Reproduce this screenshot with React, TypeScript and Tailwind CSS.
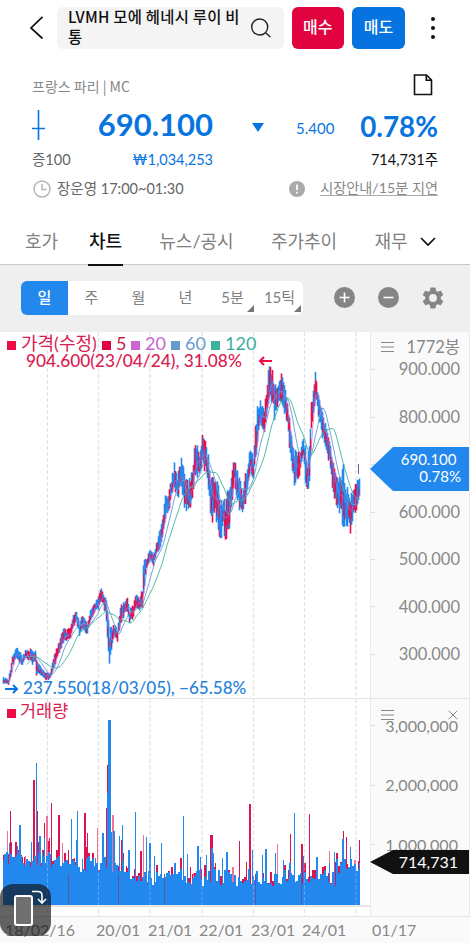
import { clsx } from "clsx";

const BLUE = "#2288ee";
const RED = "#f00a46";

// [x, high, low] of the price band, in chart pixels
const PRICE_BAND = [
  [3, 346, 351], [8, 347, 352], [10, 337, 345], [12, 324, 334], [15, 317, 326], [17, 317, 327],
  [20, 322, 331], [22, 325, 333], [25, 319, 326], [30, 318, 327], [32, 319, 332], [35, 320, 329],
  [36, 329, 342], [40, 335, 343], [45, 342, 348], [50, 340, 346], [53, 327, 337], [57, 315, 324],
  [60, 307, 317], [63, 297, 309], [66, 300, 309], [70, 296, 305], [73, 284, 294], [76, 280, 289],
  [79, 291, 303], [83, 284, 296], [87, 292, 302], [90, 278, 288], [94, 271, 279], [98, 266, 277],
  [101, 257, 269], [105, 266, 279], [107, 279, 304], [109, 302, 333], [111, 295, 314], [114, 294, 304],
  [117, 298, 308], [120, 275, 290], [124, 272, 282], [127, 267, 279], [129, 279, 291], [133, 273, 284],
  [136, 263, 274], [139, 269, 277], [142, 259, 277], [143, 232, 259], [146, 228, 236], [150, 217, 229],
  [153, 224, 232], [157, 209, 219], [160, 197, 214], [163, 184, 199], [165, 162, 184], [168, 164, 179],
  [171, 149, 162], [174, 134, 154], [177, 145, 165], [181, 126, 151], [184, 144, 175], [188, 154, 177],
  [191, 144, 169], [195, 114, 139], [199, 121, 144], [202, 106, 130], [206, 116, 139], [209, 134, 169],
  [211, 149, 189], [215, 147, 179], [218, 159, 194], [220, 169, 206], [223, 171, 189], [225, 174, 211],
  [228, 159, 194], [231, 144, 179], [234, 129, 147], [236, 136, 159], [240, 154, 179], [242, 161, 183],
  [246, 141, 164], [250, 119, 137], [253, 124, 144], [255, 99, 129], [257, 80, 109], [260, 72, 89],
  [264, 79, 99], [267, 54, 79], [269, 33, 60], [272, 42, 68], [274, 59, 84], [277, 54, 74],
  [281, 43, 68], [284, 56, 80], [287, 72, 90], [290, 99, 124], [294, 121, 151], [297, 124, 149],
  [300, 119, 137], [303, 109, 124], [305, 119, 146], [307, 134, 159], [309, 109, 144], [311, 74, 99],
  [313, 60, 79], [315, 42, 64], [318, 64, 84], [321, 77, 99], [325, 94, 114], [329, 109, 129],
  [333, 134, 159], [336, 149, 174], [340, 150, 178], [343, 142, 189], [347, 161, 189], [350, 169, 197],
  [353, 157, 179], [357, 152, 174], [359, 149, 164],
];

// [x, top] of the tall volume bars
const RED_SPIKES = [
  [3, 160], [7, 136], [10, 116], [15, 147], [22, 162], [25, 161], [33, 85], [37, 116], [44, 128],
  [46, 121], [49, 143], [51, 108], [58, 120], [62, 148], [68, 155], [84, 118], [87, 138], [97, 133],
  [106, 113], [107, 70], [110, 43], [112, 120], [121, 145], [126, 171], [140, 156], [143, 140],
  [161, 173], [171, 172], [190, 172], [193, 178], [210, 140], [212, 140], [215, 168], [232, 172],
  [239, 146], [246, 167], [249, 109], [277, 149], [290, 139], [301, 149], [309, 119], [329, 156],
  [335, 167], [343, 136], [346, 142], [354, 165], [359, 145],
];
const BLUE_SPIKES = [
  [5, 162], [9, 148], [17, 151], [19, 130], [31, 147], [36, 68], [39, 141], [42, 157], [44, 143],
  [49, 159], [71, 124], [77, 116], [76, 145], [82, 164], [95, 163], [102, 138], [107, 98],
  [108, 25], [109, 25], [110, 91], [111, 137], [113, 136], [119, 141], [122, 130], [128, 155],
  [135, 117], [146, 142], [149, 148], [154, 161], [161, 148], [174, 168], [183, 121], [187, 159],
  [197, 151], [200, 162], [206, 160], [211, 153], [213, 158], [222, 163], [226, 157], [252, 155],
  [262, 160], [265, 154], [275, 158], [283, 165], [289, 168], [294, 118], [303, 161], [316, 162],
  [329, 168], [334, 157], [342, 144], [350, 152], [359, 168],
];

const GRID_X = [47.5, 98.5, 150, 202, 253.5, 304.5, 356];

const noise = (n: number) => {
  const s = Math.sin(n * 127.1 + 11.7) * 43758.5453;
  return s - Math.floor(s);
};

const bandAt = (x: number) => {
  const i = Math.max(1, PRICE_BAND.findIndex((p) => p[0] >= x));
  const a = PRICE_BAND[i - 1];
  const b = PRICE_BAND[i];
  const t = Math.min(1, Math.max(0, (x - a[0]) / (b[0] - a[0])));
  return [a[1] + (b[1] - a[1]) * t, a[2] + (b[2] - a[2]) * t];
};

const average = (lag: number) => {
  const points: string[] = [];
  for (let x = 3 + lag; x <= 359; x += 1) {
    let sum = 0;
    for (let k = 0; k <= lag; k++) {
      const [hi, lo] = bandAt(x - k);
      sum += (hi + lo) / 2;
    }
    points.push(`${x},${(sum / (lag + 1)).toFixed(1)}`);
  }
  return points.join(" ");
};

const candles = Array.from({ length: 357 }, (_, i) => {
  const x = 3 + i;
  const [hi, lo] = bandAt(x);
  const [nextHi] = bandAt(Math.min(359, x + 1));
  const span = lo - hi;
  const top = hi + (noise(x) - 0.55) * span * 0.4;
  const bottom = lo - (noise(x + 900) - 0.55) * span * 0.4;
  const rising = nextHi < hi;
  const cut = top + (bottom - top) * (0.2 + noise(x + 400) * 0.5);
  return { x, top, bottom, cut, red: noise(x + 70) < (rising ? 0.38 : 0.18), split: noise(x + 33) < 0.5 };
});

const volumes = Array.from({ length: 357 }, (_, i) => {
  const x = 3 + i;
  const early = x < 75 ? 42 : x < 130 ? 38 : x > 335 ? 36 : 25;
  const group = Math.floor(x / 2);
  const blue = early + (noise(group + 5) - 0.35) * 17;
  const red = blue + (noise(group + 210) > 0.62 ? noise(group + 90) * 12 : 0);
  return { x, blue, red };
});

const Dashes = ({ height }: { height: number }) => (
  <>
    {GRID_X.map((x) => (
      <line key={x} x1={x} x2={x} y1="0" y2={height} stroke="#e3e3e3" strokeWidth="1.3" strokeDasharray="4 2" />
    ))}
  </>
);

const PriceChart = () => (
  <svg className="block h-[366px] w-[370px]" viewBox="0 0 370 366">
    <Dashes height={366} />
    <g>
      {candles.map((c) => (
        <g key={c.x}>
          <rect x={c.x - 0.3} y={c.top} width="1.6" height={c.bottom - c.top} fill={c.red ? RED : BLUE} />
          {c.split && <rect x={c.x} y={c.cut} width="1.2" height={(c.bottom - c.cut) * 0.7} fill={c.red ? BLUE : RED} />}
        </g>
      ))}
      <rect x="358" y="132" width="1" height="10" fill="#7459a5" />
    </g>
    <g fill="none" strokeWidth="0.9">
      <polyline points={average(4)} stroke="#cb65d3" strokeOpacity="0.7" />
      <polyline points={average(12)} stroke="#659ccd" />
      <polyline points={average(24)} stroke="#3ab29c" />
    </g>
  </svg>
);

const VolumeChart = () => (
  <svg className="block h-[217px] w-[370px]" viewBox="0 0 370 217">
    <Dashes height={217} />
    <g shapeRendering="crispEdges">
      {volumes.map((v) => (
        <rect key={v.x} x={v.x} y={206 - v.red} width="1" height={v.red} fill="#dc1450" />
      ))}
      {RED_SPIKES.map(([x, y], i) => (
        <rect key={x} x={x} y={y - 4} width={i % 3 === 0 ? 2 : 1} height={210 - y} fill={i % 4 === 1 ? "#ee7598" : "#dc1450"} />
      ))}
      {volumes.map((v) => (
        <rect key={v.x} x={v.x} y={206 - v.blue} width="1" height={v.blue} fill={BLUE} />
      ))}
      {BLUE_SPIKES.map(([x, y], i) => (
        <rect key={x} x={x} y={y - 4} width={i % 3 === 0 ? 2 : 1} height={210 - y} fill={BLUE} />
      ))}
      {[68, 118, 164, 255, 301].map((x) => (
        <rect key={x} x={x} y="175" width="1" height="31" fill="#6455a5" />
      ))}
    </g>
    <g stroke="#fff" strokeOpacity="0.25" strokeDasharray="4 2">
      {GRID_X.map((x) => (
        <line key={x} x1={x} x2={x} y1="162" y2="206" />
      ))}
    </g>
    <line x1="0" x2="370" y1="207" y2="207" stroke="#e6e6e6" strokeWidth="2" />
  </svg>
);

const Header = () => (
  <header className="flex h-[49px] pt-[7px]">
    <svg className="ml-[29px] mt-[9px] h-6 w-4" viewBox="0 0 16 24" fill="none" stroke="#111" strokeWidth="1.7">
      <path d="M13.5 .8 2 12 13.5 22.5" />
    </svg>
    <div className="ml-3 flex h-[42px] w-[227px] rounded-md bg-[#f4f4f4] pl-[11px]">
      <p className="w-[178px] whitespace-nowrap text-[15.4px] font-medium leading-[19.5px] tracking-[0.25px] text-[#111] font-['Noto_Sans_CJK_KR',sans-serif]">
        LVMH 모에 헤네시 루이 비
        <br />통
      </p>
      <svg className="ml-[5px] mt-[11px] h-5 w-5" viewBox="0 0 20 20" fill="none" stroke="#222" strokeWidth="1.4">
        <circle cx="8.7" cy="9" r="8" />
        <path d="m14.3 14.6 5 4.5" />
      </svg>
    </div>
    <button className="ml-[7.5px] h-[42px] w-[52.5px] rounded-md bg-[#e0033f] pb-0.5 text-base font-medium text-white">매수</button>
    <button className="ml-2 h-[42px] w-[53px] rounded-md bg-[#0673e0] pb-0.5 text-base font-medium text-white">매도</button>
    <div className="ml-[26px] mt-[10px] flex flex-col gap-[5px]">
      {[0, 1, 2].map((dot) => (
        <span key={dot} className="size-1 rounded-full bg-[#111]" />
      ))}
    </div>
  </header>
);

const Quote = () => (
  <section className="h-[167px] pl-8 pr-8 pt-[24px]">
    <div className="flex h-[26px] items-center justify-between text-[#888]">
      <p className="text-[14px] font-['Noto_Sans_CJK_KR',sans-serif]">프랑스 파리 | MC</p>
      <svg className="mb-0.5 mr-[5px] h-[22px] w-5" viewBox="0 0 20 22" fill="none" stroke="#111" strokeWidth="1.6">
        <path d="M1.5 1h12l5 5v14.5h-17zM13.3 1v5.3h5" />
      </svg>
    </div>
    <div className="flex h-[51px] items-center text-[#0874df]">
      <svg className="h-[30px] w-[14px]" viewBox="0 0 14 30" stroke="#0874df" strokeWidth="1.6">
        <path d="M6.5 0v30M0 18.5h13" />
      </svg>
      <strong className="w-[167px] text-right text-[31px] leading-none">690.100</strong>
      <svg className="ml-[39px] mt-1.5 h-[9px] w-3" viewBox="0 0 12 9" fill="#0874df">
        <path d="M0 0h12L6 9z" />
      </svg>
      <span className="ml-8 w-[39px] whitespace-nowrap pt-2 text-[15px]">5.400</span>
      <strong className="grow pt-1 text-right text-[27.8px] leading-none">0.78%</strong>
    </div>
    <div className="flex h-[20px] items-center text-[14.5px] leading-none">
      <span className="w-[60px] text-[#666]">증100</span>
      <span className="w-[121px] text-right text-[#0874df]">₩1,034,253</span>
      <span className="grow text-right text-[#111]">714,731주</span>
    </div>
    <div className="flex h-[36px] items-center pt-px text-[14.5px] leading-none text-[#666]">
      <svg className="ml-px h-[18px] w-[18px]" viewBox="0 0 18 18" fill="none" stroke="#b5b5b5" strokeWidth="1.5">
        <circle cx="9" cy="9" r="8" />
        <path d="M9 4v5.5h4.5" />
      </svg>
      <span className="ml-[6px] grow pt-0.5">장운영 17:00~01:30</span>
      <svg className="mr-[15px] h-4 w-4" viewBox="0 0 16 16">
        <circle cx="8" cy="8" r="8" fill="#aaa" />
        <path d="M8 3.5v5.5M8 10.8v1.8" stroke="#fff" strokeWidth="1.7" />
      </svg>
      <span className="whitespace-nowrap border-b border-[#aaa] text-[14.2px] text-[#888]">시장안내/15분 지연</span>
    </div>
  </section>
);

const TABS = [
  { label: "호가", width: "w-[33px]" },
  { label: "차트", width: "w-[35px]" },
  { label: "뉴스/공시", width: "w-[75px]" },
  { label: "주가추이", width: "w-[68px]" },
  { label: "재무", width: "w-[34px]" },
];

const Tabs = () => (
  <nav className="flex h-[49px] border-b border-[#c9c9c9] pl-[25px] text-[18px] text-[#808080]">
    {TABS.map((tab, i) => (
      <div
        key={tab.label}
        className={clsx(
          "flex h-[50px] justify-center whitespace-nowrap pt-[12px]",
          tab.width,
          i === 1 && "ml-[30px] border-b-2 border-[#111] font-medium text-[#111]",
          i > 1 && "ml-9"
        )}
      >
        {tab.label}
      </div>
    ))}
    <svg className="ml-3 mt-[21px] h-[10px] w-4" viewBox="0 0 16 10" fill="none" stroke="#111" strokeWidth="1.7">
      <path d="m1 1 7 7 7-7" />
    </svg>
  </nav>
);

const PERIODS = ["일", "주", "월", "년", "5분", "15틱"];

const Toolbar = () => (
  <div className="flex h-[67px] bg-[#efefef] pl-[21px] pt-4">
    <div className="flex h-[34px] w-[282px] overflow-hidden rounded-md bg-white text-[15px] text-[#808080]">
      {PERIODS.map((period, i) => (
        <div
          key={period}
          className={clsx(
            "relative flex w-[47px] items-center justify-center pb-px",
            i === 0 && "bg-[#2288ee] font-medium text-white"
          )}
        >
          {period}
          {i > 3 && (
            <svg className="absolute bottom-[3px] right-[2px] size-[7px]" viewBox="0 0 7 7" fill="#777">
              <path d="M7 0v7H0z" />
            </svg>
          )}
        </div>
      ))}
    </div>
    <svg className="ml-[31px] mt-[6px] size-[21px]" viewBox="0 0 21 21">
      <circle cx="10.5" cy="10.5" r="10.5" fill="#858585" />
      <path d="M5.5 10.5h10M10.5 5.5v10" stroke="#fff" strokeWidth="1.6" />
    </svg>
    <svg className="ml-[23px] mt-[6px] size-[21px]" viewBox="0 0 21 21">
      <circle cx="10.5" cy="10.5" r="10.5" fill="#858585" />
      <path d="M5.5 10.5h10" stroke="#fff" strokeWidth="1.6" />
    </svg>
    <svg className="ml-[21px] mt-[4px] size-[26px]" viewBox="0 0 24 24" fill="#858585">
      <path d="M19.14 12.94c.04-.3.06-.61.06-.94s-.02-.64-.07-.94l2.03-1.58a.49.49 0 0 0 .12-.61l-1.92-3.32a.49.49 0 0 0-.59-.22l-2.39.96a7 7 0 0 0-1.62-.94l-.36-2.54a.48.48 0 0 0-.48-.41h-3.84a.47.47 0 0 0-.47.41l-.36 2.54c-.59.24-1.13.57-1.62.94l-2.39-.96a.47.47 0 0 0-.59.22L2.74 8.87a.48.48 0 0 0 .12.61l2.03 1.58c-.05.3-.09.63-.09.94s.02.64.07.94l-2.03 1.58a.49.49 0 0 0-.12.61l1.92 3.32c.12.22.37.29.59.22l2.39-.96c.5.38 1.03.7 1.62.94l.36 2.54c.05.24.24.41.48.41h3.84c.24 0 .44-.17.47-.41l.36-2.54a6.8 6.8 0 0 0 1.62-.94l2.39.96c.22.08.47 0 .59-.22l1.92-3.32a.47.47 0 0 0-.12-.61zM12 15.6a3.6 3.6 0 1 1 0-7.2 3.6 3.6 0 0 1 0 7.2" />
    </svg>
  </div>
);

const LEGEND = [
  { label: "가격(수정)", box: "bg-[#f00a46]", text: "w-[81px] text-[#d91c52]" },
  { label: "5", box: "bg-[#e0033f]", text: "w-[15px] text-[#c81c4c]" },
  { label: "20", box: "bg-[#cb65d3]", text: "w-[26px] text-[#c568cf]" },
  { label: "60", box: "bg-[#659ccd]", text: "w-[26px] text-[#659ccd]" },
  { label: "120", box: "bg-[#3ab29c]", text: "text-[#3ab29c]" },
];

const MenuLines = () => (
  <svg className="h-[10px] w-[13px]" viewBox="0 0 13 10" stroke="#888" strokeWidth="1">
    <path d="M0 .5h13M0 5h13M0 9.5h13" />
  </svg>
);

const PricePanel = () => (
  <div className="flex h-[367px] border-b border-[#e3e3e3]">
    <div className="relative w-[370px]">
      <PriceChart />
      <div className="absolute left-[7px] top-0 flex h-[22px] items-center text-[18px] leading-none">
        {LEGEND.map((item) => (
          <div key={item.label} className="flex items-center">
            <span className={clsx("mr-[5px] mt-[5px] size-[9px]", item.box)} />
            <span className={clsx("whitespace-nowrap", item.text)}>{item.label}</span>
          </div>
        ))}
      </div>
      <div className="absolute left-[26px] top-[20px] flex h-[18px] items-center leading-none text-[#d91c52]">
        <span className="w-[232px] whitespace-nowrap text-[17.3px] font-medium">904.600(23/04/24), 31.08%</span>
        <svg className="h-[10px] w-[14px]" viewBox="0 0 14 10" fill="none" stroke={RED} strokeWidth="2">
          <path d="M14 5H2M6 1 2 5l4 4" />
        </svg>
      </div>
      <div className="absolute left-[5px] top-[345px] flex h-[22px] items-center text-[#2581dc]">
        <svg className="mt-0.5 h-[10px] w-[14px]" viewBox="0 0 14 10" fill="none" stroke="#0874df" strokeWidth="2">
          <path d="M0 5h12M8 1l4 4-4 4" />
        </svg>
        <span className="ml-1 whitespace-nowrap text-[17.1px] font-medium">237.550(18/03/05), −65.58%</span>
      </div>
    </div>
    <div className="relative h-[366px] w-[100px] border-x border-[#eaeaea] bg-[#fafafa] text-[#888]">
      <div className="flex h-[13px] items-center pl-[10px] pr-[9px] pt-[15px]">
        <MenuLines />
        <span className="ml-auto text-[16.5px] leading-none">1772봉</span>
      </div>
      <div className="-mt-[1px]">
        {["900.000", "800.000", "", "600.000", "500.000", "400.000", "300.000"].map((price) => (
          <div key={price} className="flex h-[47.45px] items-center leading-none">
            <span className="h-px w-1 bg-[#ddd]" />
            <span className="ml-auto pr-[9px] text-[16.5px]">{price}</span>
          </div>
        ))}
      </div>
      <div className="absolute -left-px top-[115px] h-11 w-[99px] bg-[#2288ee] pt-[4px] text-right text-[15px] leading-[17px] text-white [clip-path:polygon(0_50%,23px_0,100%_0,100%_100%,23px_100%)]">
        <p className="pr-[12.5px]">690.100</p>
        <p className="pr-2">0.78%</p>
      </div>
    </div>
  </div>
);

const VolumePanel = () => (
  <div className="flex h-[217px]">
    <div className="relative w-[370px]">
      <VolumeChart />
      <div className="absolute left-[7px] top-0 flex h-[24px] items-center text-[17.5px] text-[#d91c52]">
        <span className="mr-[4px] mt-1 size-[9px] bg-[#f00a46]" />
        거래량
      </div>
    </div>
    <div className="relative w-[100px] border-x border-[#eaeaea] bg-[#fafafa] text-[#888]">
      <div className="absolute left-[10px] top-[11px] flex w-[77px] justify-between">
        <MenuLines />
        <svg className="h-[10px] w-[10px]" viewBox="0 0 10 10" stroke="#888">
          <path d="m.7.7 8.6 8.6M9.3.7.7 9.3" />
        </svg>
      </div>
      <div className="-mt-[3px]">
        {["3,000,000", "2,000,000", "1,000,000"].map((amount) => (
          <div key={amount} className="flex h-[59.5px] items-center">
            <span className="h-px w-1 bg-[#ddd]" />
            <span className="ml-auto pr-[11px] text-[16.1px]">{amount}</span>
          </div>
        ))}
      </div>
      <div className="absolute -left-px top-[151px] h-6 w-[99px] bg-[#111] pr-[11px] text-right text-base leading-6 text-white [clip-path:polygon(0_50%,23px_0,100%_0,100%_100%,23px_100%)]">
        714,731
      </div>
    </div>
  </div>
);

const DateAxis = () => (
  <div className="relative flex h-[27px] border-t border-[#e6e6e6] bg-[#fafafa] pl-[5px] text-[16px] leading-[25px] text-[#888]">
    <span className="w-[91px]">18/02/16</span>
    <span className="w-[52px]">20/01</span>
    <span className="w-[51px]">21/01</span>
    <span className="w-[52px]">22/01</span>
    <span className="w-[51px]">23/01</span>
    <span className="w-[70px]">24/01</span>
    <span>01/17</span>
    <div className="absolute -top-[33px] left-0 flex h-[52px] w-[51px] rounded-[13px] bg-[#111]/65 pl-[14px] pt-[11px]">
      <span className="h-[31px] w-[19px] rounded-[3px] border-2 border-white bg-[#707070]" />
      <svg className="-ml-0.5 -mt-[5px] h-[15px] w-4" viewBox="0 0 16 14" fill="none" stroke="#fff" strokeWidth="1.6">
        <path d="M1 1h6q4 0 4 4v7M7 8.5l4 4 4-4" />
      </svg>
    </div>
  </div>
);

const App = () => {
  return (
    <main className="h-[943px] w-[470px] overflow-hidden bg-white font-['Lato','Noto_Sans_CJK_KR',sans-serif]">
      <Header />
      <Quote />
      <Tabs />
      <Toolbar />
      <PricePanel />
      <VolumePanel />
      <DateAxis />
    </main>
  );
};

export default App;
